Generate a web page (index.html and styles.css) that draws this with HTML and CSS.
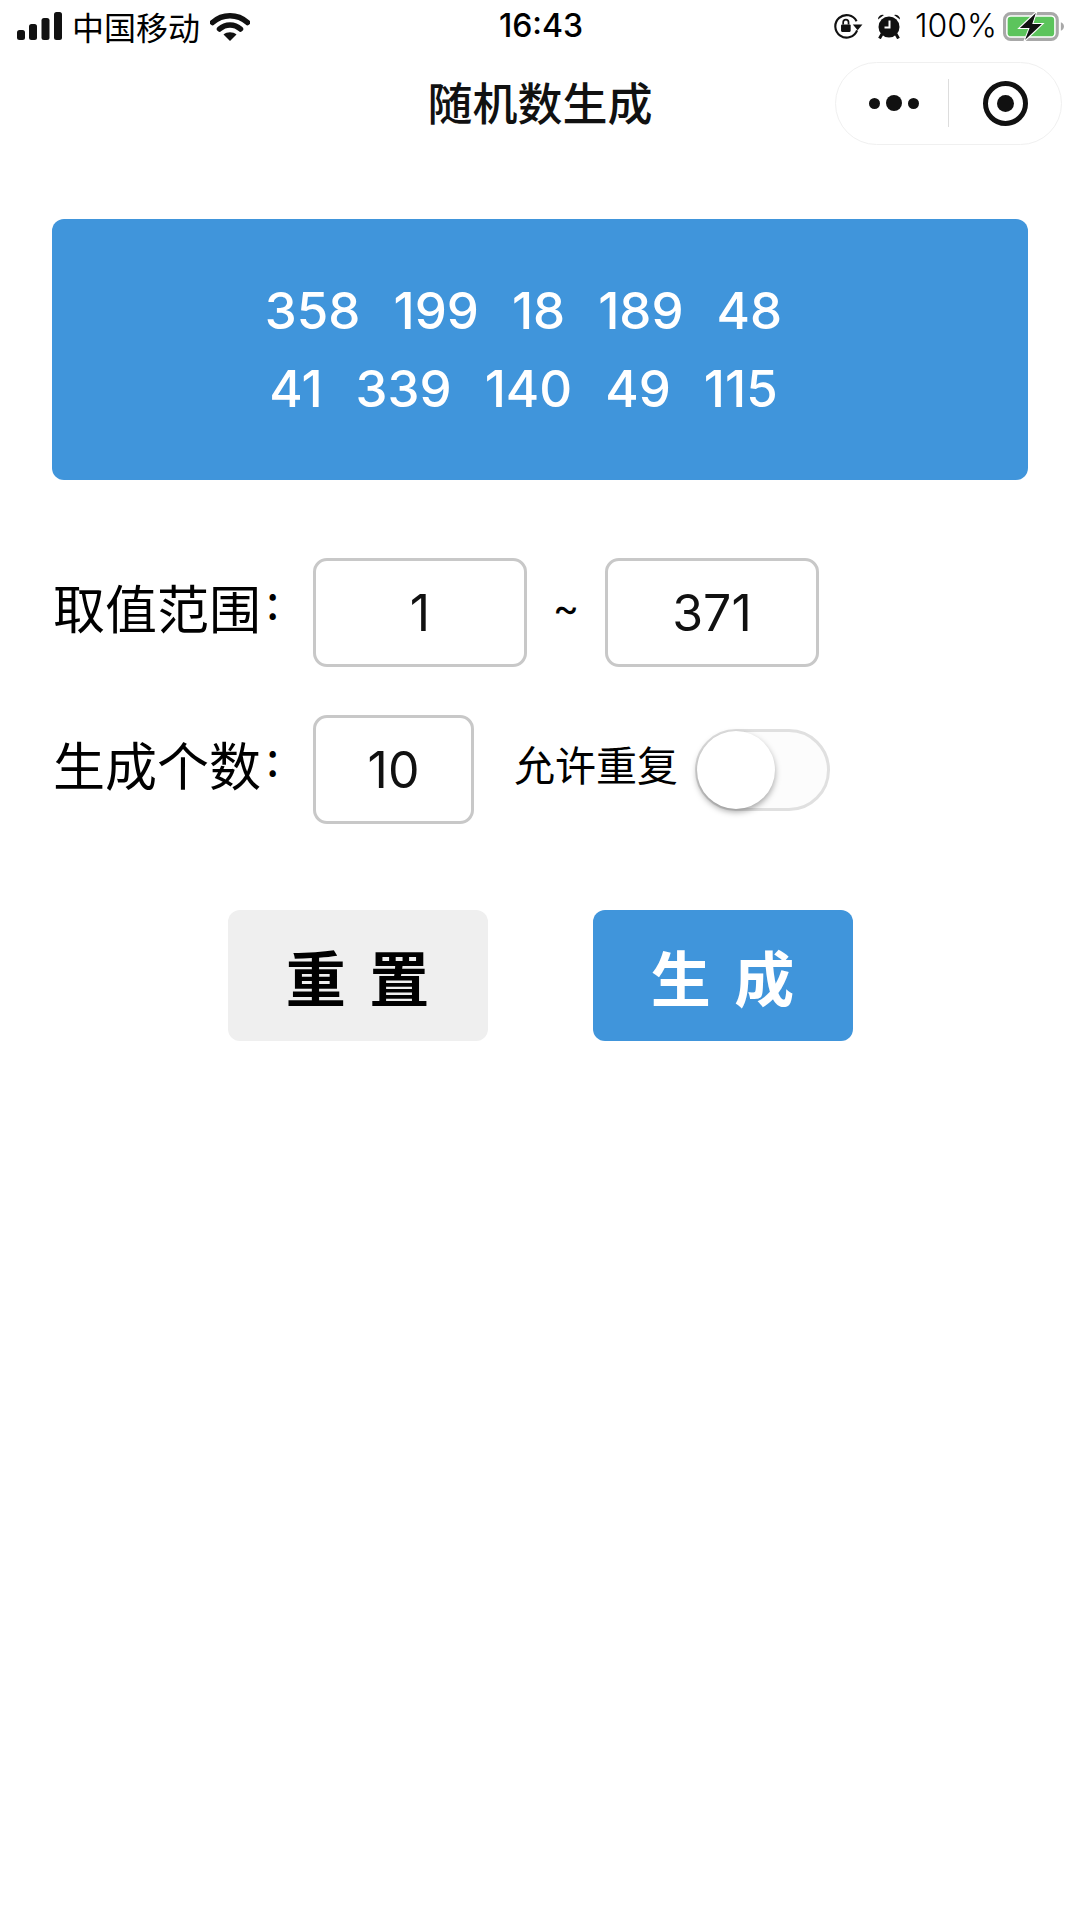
FILE: index.html
```html
<!DOCTYPE html>
<html lang="zh-CN">
<head>
<meta charset="UTF-8">
<meta name="viewport" content="width=device-width, initial-scale=1.0">
<title>随机数生成</title>
<link rel="stylesheet" href="styles.css">
</head>
<body>

<div class="status-bar">
  <div class="status-left">
    <svg class="icon-signal" viewBox="0 0 45 28">
      <rect x="0" y="18" width="8" height="10" rx="2.5"/>
      <rect x="12" y="12" width="8" height="16" rx="2.5"/>
      <rect x="24.500" y="6" width="8" height="22" rx="2.5"/>
      <rect x="37" y="0" width="8" height="28" rx="2.5"/>
    </svg>
    <span class="carrier">中国移动</span>
    <svg class="icon-wifi" viewBox="0 0 40 29">
      <path d="M2.500 10.500C12.500 1.500 27.500 1.500 37.500 10.500" class="arc"/>
      <path d="M9.500 17C15.500 11.500 24.500 11.500 30.500 17" class="arc"/>
      <path d="M13.500 22.500C17 19.500 23 19.500 26.500 22.500L20 29Z"/>
    </svg>
  </div>
  <div class="time">16:43</div>
  <div class="status-right">
    <svg class="icon-lock" viewBox="0 0 28 24">
      <path d="M22 7.500A10.500 10.500 0 1 0 22.500 16" class="ring"/>
      <path d="M18.500 10.500H27.500L23 16Z"/>
      <rect x="7.500" y="10.500" width="9" height="7" rx="1"/>
      <path d="M9.500 10.500V8.500a2.500 2.500 0 0 1 5 0V10.500" class="shackle"/>
    </svg>
    <svg class="icon-alarm" viewBox="0 0 24 26">
      <circle cx="12" cy="14" r="10.500"/>
      <path d="M1 6.500a4.500 4.500 0 0 1 6-4.500zM23 6.500a4.500 4.500 0 0 0-6-4.500z"/>
      <path d="M5 21L2.500 25.500M19 21L21.500 25.500" class="foot"/>
      <path d="M12.500 7.500V14.500H7.500" class="hands"/>
    </svg>
    <span class="battery-text">100%</span>
    <svg class="icon-battery" viewBox="0 0 60 28">
      <rect x="1.500" y="1.500" width="51" height="25" rx="6" class="shell"/>
      <rect x="4.500" y="4.500" width="45" height="19" rx="3" class="level"/>
      <path d="M56 10c2 .8 3 2.200 3 4s-1 3.200-3 4z" class="nub"/>
      <path d="M33-1L15 16H25L20 29L39 11H29Z" class="bolt"/>
    </svg>
  </div>
</div>

<div class="nav-bar">
  <div class="nav-title">随机数生成</div>
  <div class="capsule">
    <div class="capsule-more">
      <i class="dot"></i><i class="dot dot-big"></i><i class="dot"></i>
    </div>
    <div class="capsule-line"></div>
    <div class="capsule-close"><i class="close-inner"></i></div>
  </div>
</div>

<div class="result">
  <div class="result-row">
    <span class="num">358</span>
    <span class="num">199</span>
    <span class="num">18</span>
    <span class="num">189</span>
    <span class="num">48</span>
  </div>
  <div class="result-row">
    <span class="num">41</span>
    <span class="num">339</span>
    <span class="num">140</span>
    <span class="num">49</span>
    <span class="num">115</span>
  </div>
</div>

<div class="form">
  <div class="form-row">
    <div class="label">取值范围<span class="colon">:</span></div>
    <input class="field field-wide" type="text" value="1">
    <span class="tilde">~</span>
    <input class="field field-wide" type="text" value="371">
  </div>
  <div class="form-row">
    <div class="label">生成个数<span class="colon">:</span></div>
    <input class="field field-small" type="text" value="10">
    <span class="repeat-label">允许重复</span>
    <div class="switch"><div class="switch-thumb"></div></div>
  </div>
</div>

<div class="actions">
  <button class="btn btn-reset">重 置</button>
  <button class="btn btn-create">生 成</button>
</div>

</body>
</html>
```

FILE: styles.css
```css
* { box-sizing: border-box; }
body { margin: 0; background: #fff; color: #000; font-family: Inter, "Noto Sans CJK SC", sans-serif; }

.status-bar { height: 56px; padding: 0 15px 4px 17px; display: grid; grid-template-columns: 1fr auto 1fr; align-items: center; }
.status-left { display: flex; align-items: center; }
.status-right { display: flex; align-items: center; justify-content: flex-end; }
.icon-signal { width: 45px; height: 28px; fill: #111; }
.carrier { margin-left: 10px; font-size: 32px; line-height: 40px; font-family: "Noto Sans CJK SC", sans-serif; }
.icon-wifi { width: 40px; height: 29px; margin-left: 10px; fill: #111; }
.icon-wifi .arc { fill: none; stroke: #111; stroke-width: 5.500; stroke-linecap: round; }
.time { font-size: 32px; font-weight: 500; line-height: 42px; }
.icon-lock { width: 30px; height: 26px; fill: #111; }
.icon-lock .ring { fill: none; stroke: #111; stroke-width: 2; }
.icon-lock .shackle { fill: none; stroke: #111; stroke-width: 1.600; }
.icon-alarm { width: 24px; height: 26px; margin-left: 14px; fill: #111; }
.icon-alarm .foot { stroke: #111; stroke-width: 3; }
.icon-alarm .hands { fill: none; stroke: #fff; stroke-width: 2; }
.battery-text { margin-left: 14px; font-size: 32px; line-height: 40px; font-weight: 300; }
.icon-battery { width: 62px; height: 29px; margin-left: 6px; overflow: visible; }
.icon-battery .shell { fill: #fff; stroke: #a8a8a8; stroke-width: 3; }
.icon-battery .level { fill: #5cc45c; }
.icon-battery .nub { fill: #a8a8a8; }
.icon-battery .bolt { fill: #111; stroke: #fff; stroke-width: 1; }

.nav-bar { height: 98px; display: grid; grid-template-columns: 1fr auto 1fr; align-items: center; }
.nav-title { grid-column: 2; margin-top: -6px; font-size: 45px; font-weight: 500; line-height: 60px; color: #111; font-family: "Noto Sans CJK SC", sans-serif; }
.capsule { grid-column: 3; justify-self: end; margin-right: 18px; margin-top: -4px; width: 227px; height: 83px; display: flex; align-items: center; border: 1px solid #f0f0f0; border-radius: 42px; }
.capsule-more { width: 112px; padding-left: 4px; display: flex; align-items: center; justify-content: center; gap: 6px; }
.dot { width: 11px; height: 11px; border-radius: 50%; background: #111; }
.dot-big { width: 16px; height: 16px; }
.capsule-line { width: 1px; height: 48px; background: #ddd; }
.capsule-close { width: 45px; height: 45px; margin-left: 34px; display: flex; align-items: center; justify-content: center; border: 5px solid #111; border-radius: 50%; }
.close-inner { width: 17px; height: 17px; border-radius: 50%; background: #111; }

.result { margin: 65px 52px 0; height: 261px; padding-top: 53px; background: #4095db; border-radius: 12px; color: #fff; }
.result-row { display: flex; justify-content: center; height: 78px; align-items: center; }
.num { margin-right: 33px; font-size: 51px; font-weight: 500; line-height: 78px; }

.form { margin-top: 78px; padding-left: 53px; }
.form-row { display: flex; align-items: center; margin-bottom: 48px; height: 109px; }
.label { width: 260px; margin-bottom: 20px; font-size: 52px; line-height: 89px; font-family: "Noto Sans CJK SC", sans-serif; }
.colon { margin-left: 5px; font-size: 48px; vertical-align: 10px; }
.field { height: 109px; padding: 0; border: 3px solid #c8c8c8; border-radius: 14px; background: #fff; color: #111; font-size: 50px; font-family: Inter, sans-serif; text-align: center; outline: none; }
.field-wide { width: 214px; }
.field-small { width: 161px; }
.tilde { width: 78px; margin-bottom: 10px; text-align: center; font-size: 40px; line-height: 99px; }
.repeat-label { margin-left: 40px; margin-bottom: 13px; font-size: 41px; font-family: "Noto Sans CJK SC", sans-serif; }
.switch { width: 135px; height: 82px; margin-left: 17px; border: 3px solid #e0e0e0; border-radius: 41px; background: #fcfcfc; }
.switch-thumb { width: 78px; height: 78px; margin: -1px 0 0 -1px; border-radius: 50%; background: #fff; box-shadow: 0 3px 6px rgba(0, 0, 0, .35); }

.actions { margin-top: 86px; display: flex; justify-content: center; gap: 105px; }
.btn { width: 260px; height: 131px; border: none; border-radius: 12px; font-size: 60px; font-weight: 700; font-family: "Noto Sans CJK SC", sans-serif; word-spacing: 10px; }
.btn-reset { background: #efefef; color: #000; }
.btn-create { background: #4095db; color: #fff; }
```
